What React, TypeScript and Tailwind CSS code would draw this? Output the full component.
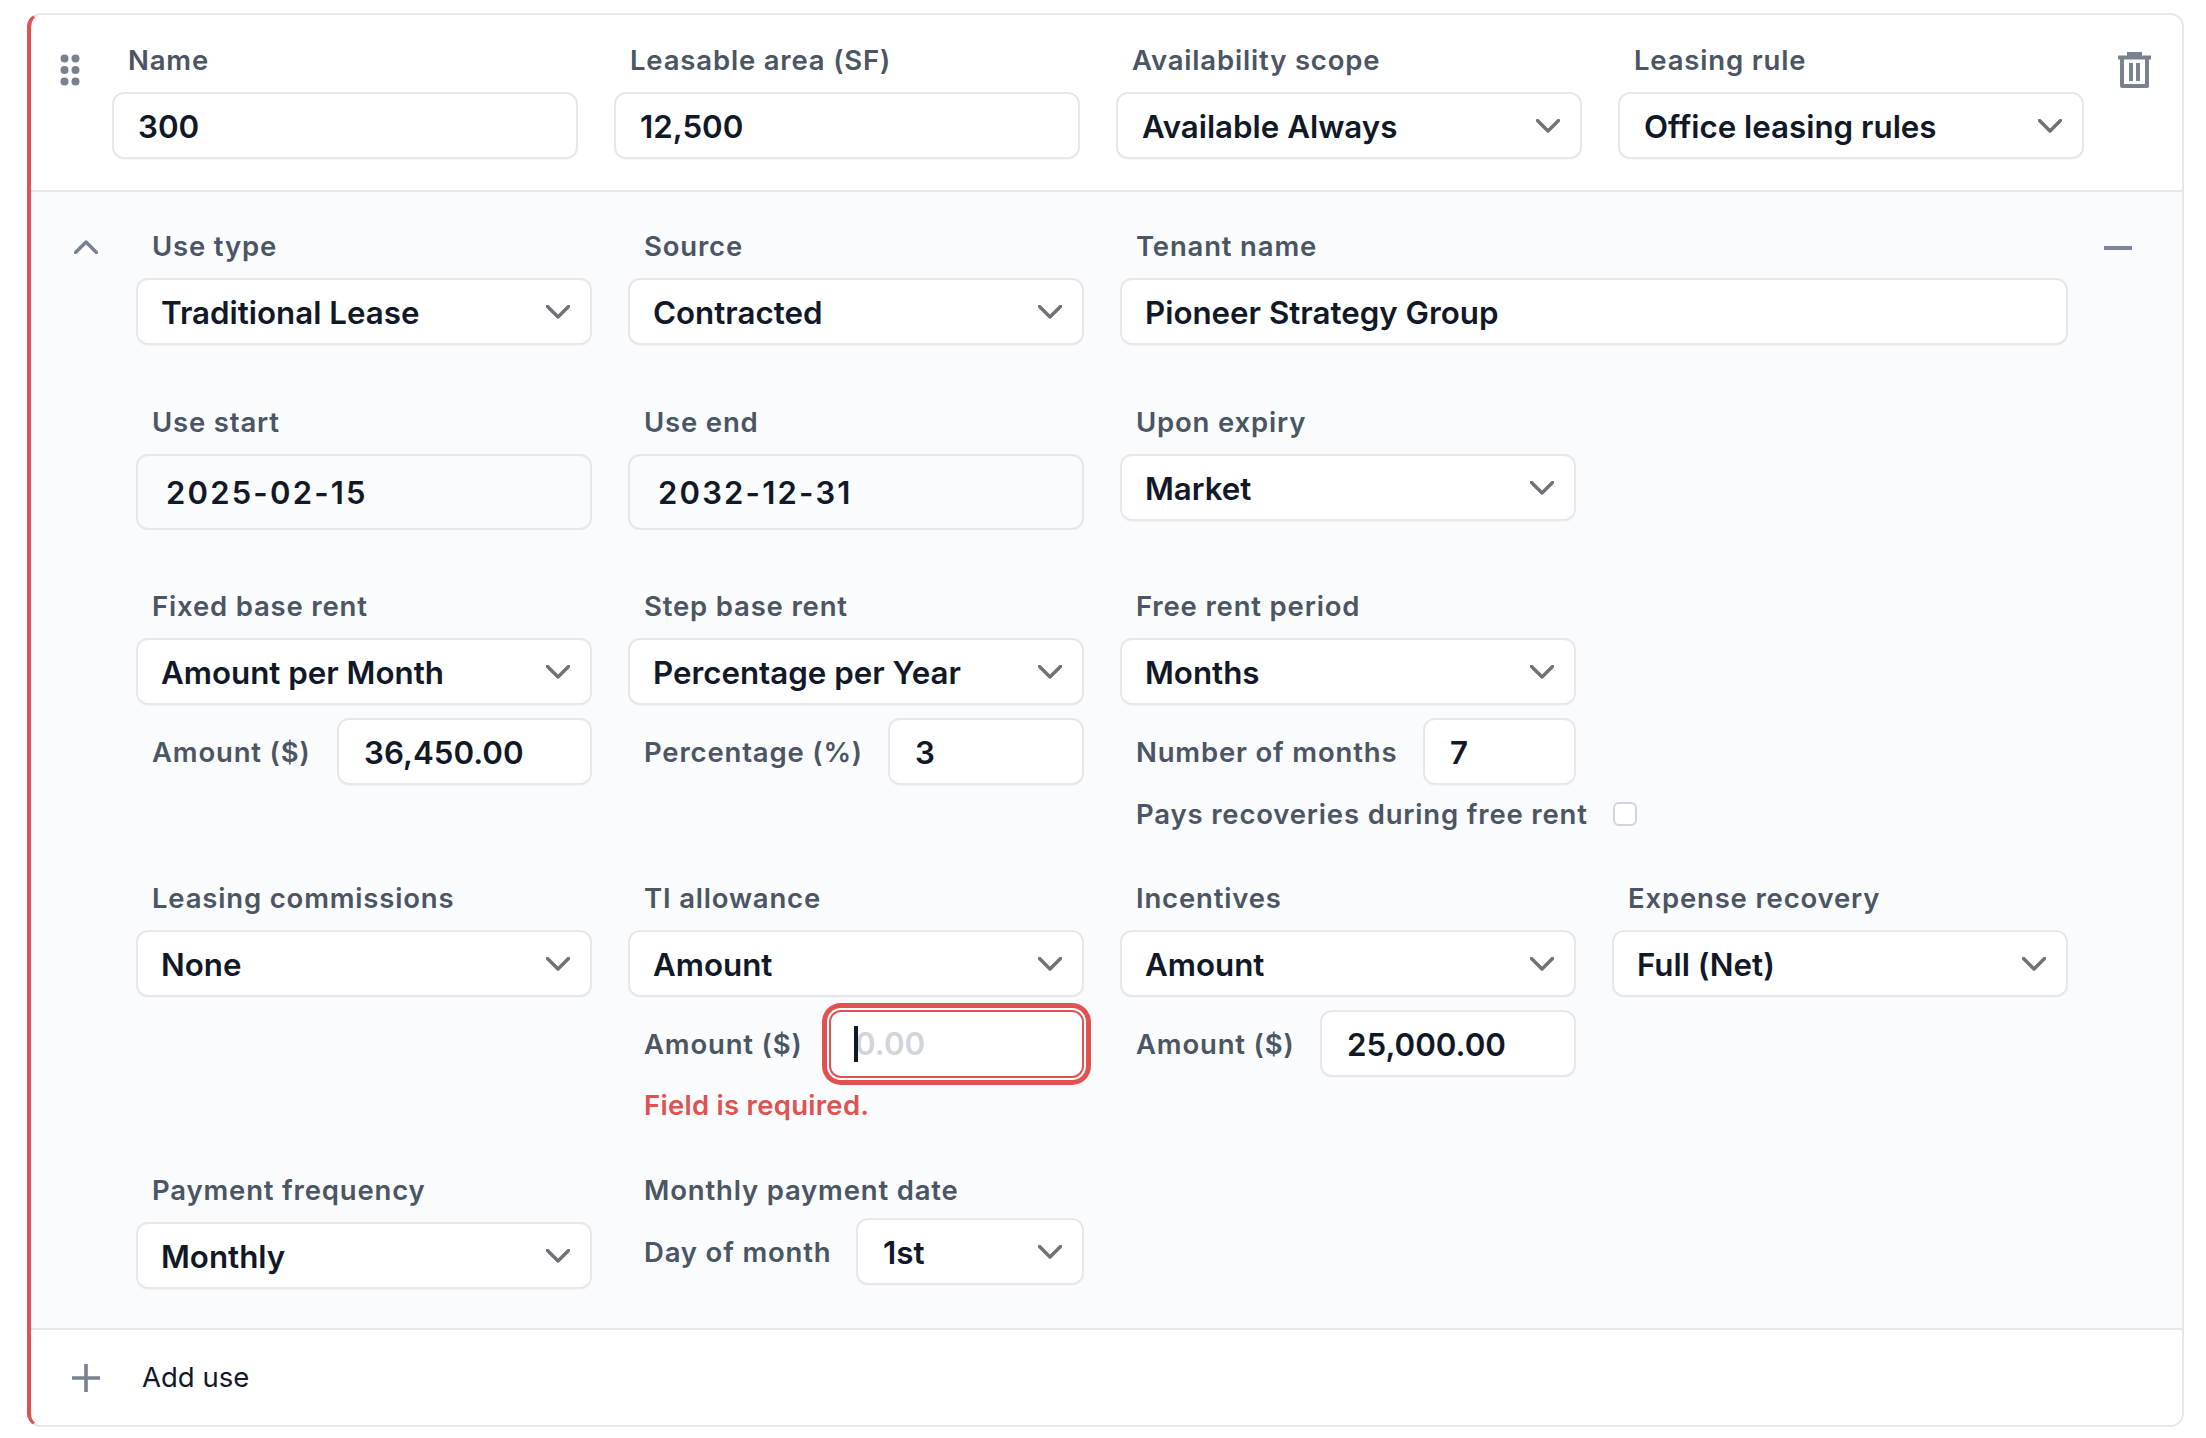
import React from "react";

function Chevron({ up = false, className = "" }: { up?: boolean; className?: string }) {
  return (
    <svg width="24" height="14" viewBox="0 0 24 14" fill="none" className={className}>
      <path d={up ? "M1.5 12.5 L12 2 L22.5 12.5" : "M1.5 1.5 L12 12 L22.5 1.5"} stroke="currentColor" strokeWidth="3.4" strokeLinecap="round" strokeLinejoin="round" />
    </svg>
  );
}

function Label({ children }: { children: React.ReactNode }) {
  return <div className="h-[34px] pl-[16px] text-[27.5px] leading-[35px] font-semibold tracking-[0.03em] text-[#4b5563] whitespace-nowrap">{children}</div>;
}

function Field({ label, children }: { label: string; children: React.ReactNode }) {
  return (
    <div className="flex flex-col">
      <div className="mb-[15px]"><Label>{label}</Label></div>
      {children}
    </div>
  );
}

const boxClass = "h-[67px] flex items-center bg-white border-2 border-[#e5e7eb] rounded-xl shadow-[0_1px_1px_rgba(0,0,0,0.03)] text-[31.3px] font-semibold text-[#111827] whitespace-nowrap";

function Select({ value, className = "w-full", pad = "pl-[24px]" }: { value: string; className?: string; pad?: string }) {
  return (
    <div className={`${className} ${pad} ${boxClass} justify-between pr-[20px]`}>
      <span className="pt-[3px]">{value}</span>
      <Chevron className="text-[#6f7277] shrink-0" />
    </div>
  );
}

function Input({ value, className = "w-full", pad = "pl-[24px]" }: { value: string; className?: string; pad?: string }) {
  return (
    <div className={`${className} ${pad} ${boxClass}`}>
      <span className="pt-[3px]">{value}</span>
    </div>
  );
}

function DateInput({ value }: { value: string }) {
  return (
    <div className="w-full h-[76px] flex items-center pl-[28px] bg-[#f9fbfd] border-2 border-[#e5e7eb] rounded-xl text-[31px] font-semibold tracking-[2.2px] text-[#111827]">
      <span className="pt-[2px]">{value}</span>
    </div>
  );
}

function Inline({ label, children }: { label: string; children: React.ReactNode }) {
  return (
    <div className="flex items-center justify-between">
      <Label>{label}</Label>
      {children}
    </div>
  );
}

const rowClass = "grid grid-cols-[repeat(4,456px)] gap-x-[36px]";

export default function App() {
  return (
    <div className="min-h-[1438px] bg-white pt-[13px] pl-[27px] [font-family:Inter,sans-serif]">
      <div className="w-[2157px] border-2 border-l-4 border-[#e5e7eb] border-l-[#e05252] rounded-[14px] overflow-hidden bg-white">
        {/* Header row */}
        <div className="flex pt-[28px] pb-[31px] border-b-2 border-[#e5e7eb]">
          <div className="w-[81px] shrink-0 pl-[29px] pt-[11px]">
            <svg width="20" height="32" viewBox="0 0 20 32" fill="#79818f">
              <circle cx="4.5" cy="4.5" r="4" /><circle cx="15.5" cy="4.5" r="4" />
              <circle cx="4.5" cy="16" r="4" /><circle cx="15.5" cy="16" r="4" />
              <circle cx="4.5" cy="27.5" r="4" /><circle cx="15.5" cy="27.5" r="4" />
            </svg>
          </div>
          <div className="grid grid-cols-[repeat(4,466px)] gap-x-[36px]">
            <Field label="Name"><Input value="300" /></Field>
            <Field label="Leasable area (SF)"><Input value="12,500" /></Field>
            <Field label="Availability scope"><Select value="Available Always" /></Field>
            <Field label="Leasing rule"><Select value="Office leasing rules" /></Field>
          </div>
          <div className="ml-[34px] pt-[9px]">
            <svg width="33" height="36" viewBox="0 0 33 36" fill="none" stroke="#79818f" strokeWidth="4">
              <path d="M0 5.5 H33" />
              <path d="M11 4 V2 H22 V4" />
              <path d="M4 6 V34 H29 V6" strokeLinejoin="round" />
              <path d="M13 11 V29 M20 11 V29" />
            </svg>
          </div>
        </div>

        {/* Use section */}
        <div className="flex bg-[#f9fbfd] pt-[37px] pb-[39px]">
          <div className="w-[105px] shrink-0 pl-[43px] pt-[11px] text-[#79818f]">
            <Chevron up />
          </div>
          <div className="w-[1932px] flex flex-col">
            <div className={rowClass}>
              <Field label="Use type"><Select pad="pl-[23px]" value="Traditional Lease" /></Field>
              <Field label="Source"><Select pad="pl-[23px]" value="Contracted" /></Field>
              <div className="col-span-2">
                <Field label="Tenant name"><Input pad="pl-[23px]" value="Pioneer Strategy Group" /></Field>
              </div>
            </div>

            <div className={`${rowClass} mt-[60px]`}>
              <Field label="Use start"><DateInput value="2025-02-15" /></Field>
              <Field label="Use end"><DateInput value="2032-12-31" /></Field>
              <Field label="Upon expiry"><Select pad="pl-[23px]" value="Market" /></Field>
            </div>

            <div className={`${rowClass} mt-[59px]`}>
              <Field label="Fixed base rent">
                <Select pad="pl-[23px]" value="Amount per Month" />
                <div className="mt-[13px]"><Inline label="Amount ($)"><Input pad="pl-[25px]" value="36,450.00" className="w-[255px]" /></Inline></div>
              </Field>
              <Field label="Step base rent">
                <Select pad="pl-[23px]" value="Percentage per Year" />
                <div className="mt-[13px]"><Inline label="Percentage (%)"><Input pad="pl-[25px]" value="3" className="w-[196px]" /></Inline></div>
              </Field>
              <Field label="Free rent period">
                <Select pad="pl-[23px]" value="Months" />
                <div className="mt-[13px]"><Inline label="Number of months"><Input pad="pl-[25px]" value="7" className="w-[153px]" /></Inline></div>
                <div className="mt-[12px] flex items-center gap-[25px]">
                  <Label>Pays recoveries during free rent</Label>
                  <div className="w-[24px] h-[24px] shrink-0 bg-white border-2 border-[#d1d5db] rounded-[6px]" />
                </div>
              </Field>
            </div>

            <div className={`${rowClass} mt-[50px]`}>
              <Field label="Leasing commissions"><Select pad="pl-[23px]" value="None" /></Field>
              <Field label="TI allowance">
                <Select pad="pl-[23px]" value="Amount" />
                <div className="mt-[13px]">
                  <Inline label="Amount ($)">
                    <div className="relative w-[255px] h-[68px] flex items-center pl-[24px] bg-white border-2 border-[#e05252] rounded-xl text-[31.3px] font-semibold text-[#d1d5db] shadow-[0_0_0_2px_#ffffff,0_0_0_7px_#e05252]">
                      <span className="pt-[1px]">0.00</span>
                      <span className="absolute left-[23px] top-[14px] w-[4px] h-[36px] bg-[#111827]" />
                    </div>
                  </Inline>
                </div>
                <div className="mt-[10px] h-[34px] pl-[16px] text-[27.5px] leading-[35px] font-semibold tracking-[0.01em] text-[#e05252]">Field is required.</div>
              </Field>
              <Field label="Incentives">
                <Select pad="pl-[23px]" value="Amount" />
                <div className="mt-[13px]"><Inline label="Amount ($)"><Input pad="pl-[25px]" value="25,000.00" className="w-[256px]" /></Inline></div>
              </Field>
              <Field label="Expense recovery"><Select pad="pl-[23px]" value="Full (Net)" /></Field>
            </div>

            <div className={`${rowClass} mt-[51px]`}>
              <Field label="Payment frequency"><Select pad="pl-[23px]" value="Monthly" /></Field>
              <Field label="Monthly payment date">
                <div className="-mt-[4px]">
                  <Inline label="Day of month"><Select pad="pl-[25px]" value="1st" className="w-[228px]" /></Inline>
                </div>
              </Field>
            </div>
          </div>
          <div className="ml-[36px] pt-[17px]">
            <div className="w-[28px] h-[4px] bg-[#7e8599]" />
          </div>
        </div>

        {/* Footer */}
        <div className="h-[97px] flex items-center pl-[41px] gap-[42px] border-t-2 border-[#e5e7eb] bg-white">
          <svg width="28" height="28" viewBox="0 0 28 28" fill="none" stroke="#79818f" strokeWidth="3.6">
            <path d="M14 0 V28 M0 14 H28" />
          </svg>
          <span className="text-[27.5px] text-[#111827]">Add use</span>
        </div>
      </div>
    </div>
  );
}
